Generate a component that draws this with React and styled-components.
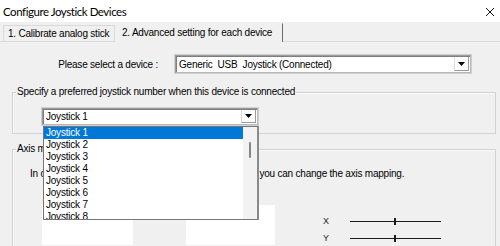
import React from "react";
import styled, { createGlobalStyle } from "styled-components";

const Global = createGlobalStyle`
  html, body { margin: 0; padding: 0; }
  body {
    background: #f0f0f0;
    overflow: hidden;
    font-family: "Liberation Sans", Arial, sans-serif;
    font-size: 10px;
    letter-spacing: -0.22px;
    color: #000;
  }
`;

const Window = styled.div`
  width: 500px;
  height: 246px;
  display: flex;
  flex-direction: column;
  overflow: hidden;
  background: #f0f0f0;
`;

const TitleBar = styled.div`
  height: 22px;
  flex: none;
  background: #fff;
  display: flex;
  align-items: center;
  justify-content: space-between;
  padding: 1px 5px 0 3px;
  box-sizing: border-box;
`;

const Title = styled.span`
  font-family: "Lato", "Liberation Sans", sans-serif;
  font-size: 11.5px;
  letter-spacing: -0.45px;
  color: #000;
`;

const TabStrip = styled.div`
  height: 20px;
  flex: none;
  display: flex;
  align-items: flex-end;
  padding-left: 3px;
  box-sizing: border-box;
  border-bottom: 1px solid #dadada;
`;

const Tab = styled.div`
  box-sizing: border-box;
  height: ${(p) => (p.$active ? 19 : 16)}px;
  width: ${(p) => p.$w}px;
  display: flex;
  align-items: center;
  padding-left: ${(p) => (p.$active ? 6 : 4)}px;
  padding-bottom: ${(p) => (p.$active ? 1 : 0)}px;
  background: #f0f0f0;
  border: 1px solid ${(p) => (p.$active ? "#f0f0f0" : "#d9d9d9")};
  border-right-color: ${(p) => (p.$active ? "#6e6e6e" : "#d9d9d9")};
  border-bottom: none;
  margin-bottom: ${(p) => (p.$active ? -1 : 0)}px;
  white-space: nowrap;
`;

const Panel = styled.div`
  flex: 1;
  position: relative;
  display: flex;
  flex-direction: column;
`;

const DeviceRow = styled.div`
  display: grid;
  grid-template-columns: 158px 296px;
  column-gap: 17px;
  align-items: center;
  margin-top: 13px;
`;

const Label = styled.span`
  text-align: right;
  white-space: nowrap;
`;

const Combo = styled.div`
  position: relative;
  box-sizing: border-box;
  width: ${(p) => p.$w}px;
  height: ${(p) => p.$h}px;
  background: #fff;
  border: 1px solid #9a9a9a;
  border-right-color: #b8b8b8;
  border-bottom-color: #b8b8b8;
  box-shadow: inset 1px 1px 0 #7e7e7e, 0 0 0 1px #d0d0d0;
  display: flex;
  align-items: center;
`;

const ComboText = styled.span`
  flex: 1;
  padding-left: 3px;
  white-space: pre;
`;

const DropButton = styled.div`
  width: 15px;
  align-self: stretch;
  margin: 1px 1px 1px 0;
  box-sizing: border-box;
  background: #fff;
  border-left: 1px solid #dcdcdc;
  border-bottom: 1px solid #9a9a9a;
  border-right: 1px solid #9a9a9a;
  display: flex;
  align-items: center;
  justify-content: center;
`;

const Arrow = () => (
  <svg width="7" height="4" viewBox="0 0 7 4">
    <polygon points="0,0 7,0 3.5,4" fill="#000" />
  </svg>
);

const Group = styled.fieldset`
  margin: ${(p) => p.$mt}px 4px 0 12px;
  padding: ${(p) => p.$pt}px 0 ${(p) => p.$pb}px 29px;
  border: 1px solid #d2d2d2;
  box-shadow: inset 1px 1px 0 #fafafa;
  min-width: 0;
  ${(p) => (p.$open ? "border-bottom: none; flex: 1;" : "")}
`;

const Legend = styled.legend`
  margin-left: -26px;
  padding: 0 1px;
  line-height: 12px;
  white-space: nowrap;
`;

const List = styled.div`
  position: absolute;
  top: 17px;
  left: 0;
  width: 216px;
  height: 94px;
  box-sizing: border-box;
  background: #fff;
  border: 1px solid #767676;
  border-right: 2px solid #8a8a8a;
  display: flex;
  overflow: hidden;
  z-index: 5;
`;

const Items = styled.div`
  flex: 1;
  display: flex;
  flex-direction: column;
`;

const Item = styled.div`
  height: 12px;
  flex: none;
  line-height: 12px;
  padding-left: 2px;
  background: ${(p) => (p.$sel ? "#0078d7" : "transparent")};
  color: ${(p) => (p.$sel ? "#fff" : "#000")};
`;

const ScrollTrack = styled.div`
  width: 14px;
  background: #f2f2f2;
  display: flex;
  justify-content: center;
  padding-top: 15px;
  box-sizing: border-box;
`;

const Thumb = styled.div`
  width: 2px;
  height: 16px;
  border-radius: 1px;
  background: #858585;
`;

const Sentence = styled.div`
  margin-left: -12px;
  line-height: 12px;
  white-space: nowrap;
`;

const Lower = styled.div`
  display: flex;
  margin-top: 25px;
`;

const WhiteBox = styled.div`
  width: ${(p) => p.$w}px;
  height: 40px;
  background: #fff;
  margin-right: ${(p) => p.$mr}px;
`;

const Sliders = styled.div`
  display: flex;
  flex-direction: column;
  padding-top: 10px;
  margin-left: 48px;
  gap: 5px;
`;

const SliderRow = styled.div`
  display: flex;
  align-items: center;
  height: 12px;
`;

const AxisLabel = styled.span`
  width: 27px;
  font-size: 9px;
  color: #222;
`;

const Track = styled.div`
  position: relative;
  width: 91px;
  height: 1px;
  background: #1a1a1a;
`;

const Knob = styled.div`
  position: absolute;
  left: 44px;
  top: -3px;
  width: 2px;
  height: 7px;
  background: #1a1a1a;
`;

const CloseIcon = () => (
  <svg width="10" height="10" viewBox="0 0 10 10">
    <path d="M1 1 L9 9 M9 1 L1 9" stroke="#111" strokeWidth="1" />
  </svg>
);

export default function App() {
  const items = [1, 2, 3, 4, 5, 6, 7, 8];
  return (
    <>
      <Global />
      <Window>
        <TitleBar>
          <Title>Configure Joystick Devices</Title>
          <CloseIcon />
        </TitleBar>
        <TabStrip>
          <Tab $w={112}>1. Calibrate analog stick</Tab>
          <Tab $w={168} $active>2. Advanced setting for each device</Tab>
        </TabStrip>
        <Panel>
          <DeviceRow>
            <Label>Please select a device :</Label>
            <Combo $w={296} $h={18}>
              <ComboText>Generic  USB  Joystick (Connected)</ComboText>
              <DropButton>
                <Arrow />
              </DropButton>
            </Combo>
          </DeviceRow>
          <Group $mt={13} $pt={10} $pb={8}>
            <Legend>Specify a preferred joystick number when this device is connected</Legend>
            <Combo $w={216} $h={17}>
              <ComboText>Joystick 1</ComboText>
              <DropButton>
                <Arrow />
              </DropButton>
              <List>
                <Items>
                  {items.map((n) => (
                    <Item key={n} $sel={n === 1}>
                      Joystick {n}
                    </Item>
                  ))}
                </Items>
                <ScrollTrack>
                  <Thumb />
                </ScrollTrack>
              </List>
            </Combo>
          </Group>
          <Group $mt={9} $pt={13} $pb={0} $open>
            <Legend>Axis mapping</Legend>
            <Sentence>In order to match the layouts of every game controller, you can change the axis mapping.</Sentence>
            <Lower>
              <WhiteBox $w={91} $mr={53} />
              <WhiteBox $w={89} $mr={0} />
              <Sliders>
                <SliderRow>
                  <AxisLabel>X</AxisLabel>
                  <Track>
                    <Knob />
                  </Track>
                </SliderRow>
                <SliderRow>
                  <AxisLabel>Y</AxisLabel>
                  <Track>
                    <Knob />
                  </Track>
                </SliderRow>
              </Sliders>
            </Lower>
          </Group>
        </Panel>
      </Window>
    </>
  );
}
